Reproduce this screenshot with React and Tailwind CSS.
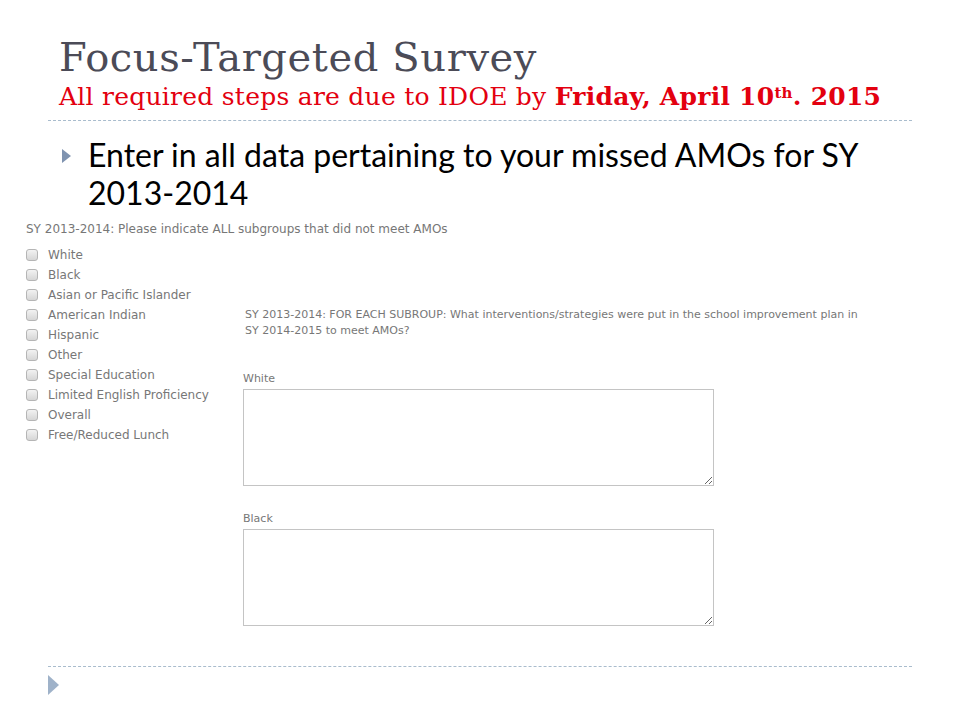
import React from "react";

const groups = [
  "White",
  "Black",
  "Asian or Pacific Islander",
  "American Indian",
  "Hispanic",
  "Other",
  "Special Education",
  "Limited English Proficiency",
  "Overall",
  "Free/Reduced Lunch",
];

function Check() {
  return (
    <span className="block w-[12px] h-[12px] rounded-[3px] border border-[#b5b5b5] bg-gradient-to-b from-[#f2f2f2] to-[#d6d6d6] shrink-0" />
  );
}

function Dashed() {
  return <div className="mx-[48px] border-t border-dashed border-[#a9bccd]" />;
}

export default function App() {
  return (
    <div className="w-[960px] h-[720px] bg-white overflow-hidden flex flex-col">
      <div className="pl-[59px] pt-[33px] font-['DejaVu_Serif',serif]">
        <div className="text-[40px] leading-[48px] tracking-[0.6px] text-[#4b4b57]">Focus-Targeted Survey</div>
        <div className="text-[25px] leading-[32px] tracking-[0.25px] text-[#e3000f] whitespace-nowrap">
          All required steps are due to IDOE by{" "}
          <span className="font-bold">
            Friday, April 10<sup className="text-[15px]">th</sup>. 2015
          </span>
        </div>
      </div>
      <div className="mt-[7px]">
        <Dashed />
      </div>
      <div className="flex pl-[62px] pt-[15px] font-['Lato',sans-serif] text-[32px] leading-[38px] text-black">
        <svg width="10" height="14" viewBox="0 0 10 14" className="mt-[13px] mr-[16px] shrink-0">
          <path d="M0 0 L9 7 L0 14 Z" fill="#7f93b0" />
        </svg>
        <div className="w-[800px]">Enter in all data pertaining to your missed AMOs for SY 2013-2014</div>
      </div>
      <div className="flex-1 flex font-['DejaVu_Sans',sans-serif] text-[#777] pt-[9px]">
        <div className="pl-[26px] w-[243px] shrink-0 text-[12px]">
          <div className="leading-[16px] whitespace-nowrap">SY 2013-2014: Please indicate ALL subgroups that did not meet AMOs</div>
          <div className="mt-[8px] flex flex-col">
            {groups.map((g) => (
              <div key={g} className="flex items-center h-[20px] gap-[10px]">
                <Check />
                <span className="leading-[14px]">{g}</span>
              </div>
            ))}
          </div>
        </div>
        <div className="pt-[86px] text-[11px]">
          <div className="pl-[2px] leading-[16px] w-[625px]">
            SY 2013-2014: FOR EACH SUBROUP: What interventions/strategies were put in the school improvement plan in SY 2014-2015 to meet AMOs?
          </div>
          <div className="mt-[32px] leading-[16px]">White</div>
          <textarea className="mt-[2px] block w-[471px] h-[97px] border border-[#c4c4c4] bg-white" />
          <div className="mt-[25px] leading-[16px]">Black</div>
          <textarea className="mt-[2px] block w-[471px] h-[97px] border border-[#c4c4c4] bg-white" />
        </div>
      </div>
      <div className="h-[54px] shrink-0">
        <Dashed />
        <div className="pl-[48px] pt-[8px]">
          <svg width="11" height="20" viewBox="0 0 11 20" className="block">
            <path d="M0 0 L11 10 L0 20 Z" fill="#9fb2c9" />
          </svg>
        </div>
      </div>
    </div>
  );
}
